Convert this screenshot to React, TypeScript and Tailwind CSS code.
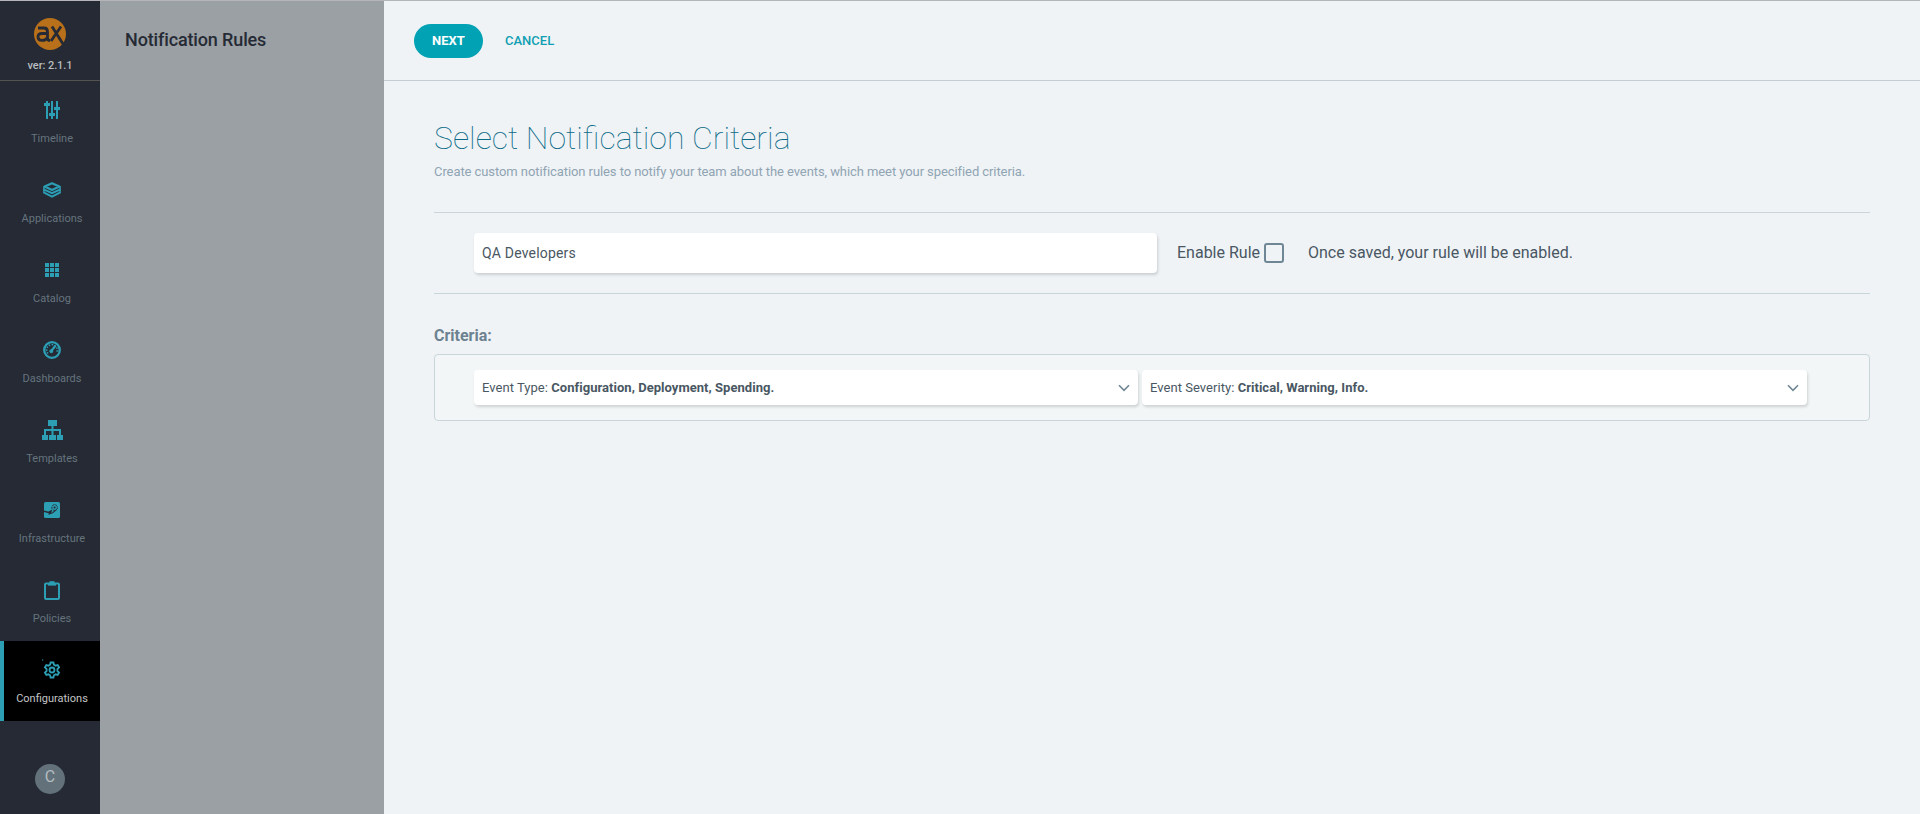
import React from "react";

const TimelineIcon = () => (
  <svg width="16" height="18" viewBox="0 0 16 18" fill="#2c9fb5">
    <path d="M2 0h2v2h2v3H4v13H2V5H0V2h2z" />
    <path d="M7 0h2v12h2v3H9v3H7v-3H5v-3h2z" />
    <path d="M12 0h2v6h2v3h-2v9h-2V9h-2V6h2z" />
  </svg>
);

const LayersIcon = () => (
  <svg width="18" height="16" viewBox="0 0 18 16" fill="none" stroke="#2c9fb5">
    <path d="M9 1.300 16.300 4.600 9 8 1.700 4.600z" strokeWidth="2.200" strokeLinejoin="round" />
    <path d="M.6 7.300 9 11.200l8.400-3.900M.6 10.400 9 14.600l8.400-4.200" strokeWidth="2" />
    <path d="M.9 4v7M17.100 4v7" strokeWidth="1.400" />
  </svg>
);

const GridIcon = () => (
  <svg width="14" height="14" viewBox="0 0 14 14" fill="#2c9fb5">
    <path d="M0 0h4v4H0zM5 0h4v4H5zM10 0h4v4h-4zM0 5h4v4H0zM5 5h4v4H5zM10 5h4v4h-4zM0 10h4v4H0zM5 10h4v4H5zM10 10h4v4h-4z" />
  </svg>
);

const GaugeIcon = () => (
  <svg width="18" height="18" viewBox="0 0 18 18" fill="none" stroke="#2c9fb5">
    <circle cx="9" cy="9" r="7.800" strokeWidth="2.300" />
    <path d="M5 12.500A5.300 5.300 0 1 1 13.300 12" strokeWidth="1.500" strokeDasharray="1.500 1.400" />
    <path d="M8.300 10 12.400 4.800" strokeWidth="2.200" />
    <circle cx="8.300" cy="10.200" r="1.500" fill="#2c9fb5" />
  </svg>
);

const SitemapIcon = () => (
  <svg width="21" height="20" viewBox="0 0 21 20" fill="#2c9fb5">
    <path d="M6 0h9v6H6zM9.500 6h2v9h-2zM2 9h17v2H2zM2 9h2v6H2zM17 9h2v6h-2z" />
    <path d="M0 15h6v5H0zM7 15h7v5H7zM15 15h6v5h-6z" />
  </svg>
);

const InfraIcon = () => (
  <svg width="16" height="16" viewBox="0 0 16 16">
    <rect width="16" height="16" rx="1.500" fill="#2c9fb5" />
    <path d="M0 9.200 4.500 10.500 8 8.500" fill="none" stroke="#252a35" strokeWidth="1.500" />
    <path d="M4.500 12.200 8.500 10.800 12.500 7.500" fill="none" stroke="#252a35" strokeWidth="1.100" />
    <circle cx="6" cy="10.700" r="1.300" fill="#252a35" />
    <circle cx="10.600" cy="5.500" r="2.800" fill="#2c9fb5" stroke="#252a35" strokeDasharray="2.600 .8" />
    <circle cx="10.600" cy="5.500" r="1.100" fill="#252a35" />
  </svg>
);

const ClipboardIcon = () => (
  <svg width="16" height="19" viewBox="0 0 16 19" fill="none" stroke="#2c9fb5" strokeWidth="2">
    <rect x="1" y="2.500" width="14" height="15.500" rx="1" />
    <path d="M4 3.600h8" />
    <path d="M5.500 1.200h5" />
  </svg>
);

const GearIcon = () => (
  <svg width="20" height="20" viewBox="0 0 24 24" fill="none" stroke="#2c9fb5" strokeWidth="2.200" className="overflow-visible">
    <path d="M10.300 3h3.400l.6 2.700 1.900 1.100 2.600-.8 1.700 2.900-2 1.900v2.400l2 1.900-1.700 2.900-2.600-.8-1.900 1.100-.6 2.700h-3.400l-.6-2.700-1.900-1.100-2.600.8-1.700-2.900 2-1.900v-2.400l-2-1.900L5.200 6l2.600.8 1.900-1.100z" />
    <circle cx="12" cy="12" r="3" />
    <path d="M0 .6h1.500v-1.200H0z" fill="#2c9fb5" stroke="none" />
  </svg>
);

const items = [
  { label: "Timeline", icon: <TimelineIcon /> },
  { label: "Applications", icon: <LayersIcon /> },
  { label: "Catalog", icon: <GridIcon /> },
  { label: "Dashboards", icon: <GaugeIcon /> },
  { label: "Templates", icon: <SitemapIcon /> },
  { label: "Infrastructure", icon: <InfraIcon /> },
  { label: "Policies", icon: <ClipboardIcon /> },
  { label: "Configurations", icon: <GearIcon />, active: true },
];

const Chevron = () => (
  <svg width="12" height="8" viewBox="0 0 12 8" fill="none" stroke="#6f8794" strokeWidth="1.600">
    <path d="M1 1.200 6 6.300l5-5.100" />
  </svg>
);

function Select({ label, value, className }: { label: string; value: string; className: string }) {
  return (
    <div className={`flex h-[35px] items-center justify-between rounded bg-white pr-2 pl-2 text-[13px] tracking-[0.04px] text-[#495763] shadow-[1px_2px_3px_rgba(0,0,0,0.15)] ${className}`}>
      <span>
        {label} <b className="font-bold">{value}</b>
      </span>
      <Chevron />
    </div>
  );
}

export default function App() {
  return (
    <div className="flex h-[814px] w-[1920px] overflow-hidden border-t border-[#b4b5b9] bg-[#eff3f6] font-['Roboto',sans-serif]">
      <aside className="flex w-[100px] shrink-0 flex-col bg-[#252a35]">
        <div className="flex h-20 flex-col items-center border-b border-[#55534f] pt-[17px]">
          <svg width="32" height="32" viewBox="0 0 32 32">
            <circle cx="16" cy="16" r="16" fill="#b8701a" />
            <g fill="none" stroke="#252a35" strokeWidth="2.800">
              <path d="M4 10h6q3.500 0 3.500 4v6q0 2.500 2.500 2.500M13.500 15.500H8q-4 0-4 3.400t4 3.500q4.500 0 5.500-3.400" />
              <path d="M18 8.500 29 26M27 8.500 17 23" />
            </g>
          </svg>
          <span className="mt-2 text-[11px] leading-4 font-medium tracking-[-0.08px] text-[#b9bcbe]">ver: 2.1.1</span>
        </div>
        <nav>
          {items.map((it) => (
            <div
              key={it.label}
              className={`flex h-20 flex-col items-center border-l-4 ${
                it.active ? "border-[#2c9fb5] bg-black text-[#c4c5c6]" : "border-transparent text-[#65747d]"
              }`}
            >
              <div className="mt-[17px] flex h-6 items-center">{it.icon}</div>
              <span className="mt-[9px] text-[11px] leading-4">{it.label}</span>
            </div>
          ))}
        </nav>
        <div className="mt-[43px] ml-[35px] flex h-[30px] w-[30px] items-center justify-center rounded-full bg-[#62717a] pb-1 text-base text-[#b4bcc1]">
          C
        </div>
      </aside>
      <section className="w-[284px] shrink-0 bg-[#9ba0a4] pt-[27px] pl-[25px]">
        <h2 className="text-[18px] leading-6 font-medium tracking-[-0.14px] text-[#252a35]">Notification Rules</h2>
      </section>
      <main className="flex-1">
        <header className="flex h-20 items-start border-b border-[#c3cfd5] pt-[23px] pl-[30px] text-[13px] font-medium">
          <button className="h-[34px] w-[69px] rounded-full bg-[#00a2b3] font-bold text-white">NEXT</button>
          <button className="ml-[22px] h-[34px] text-[#0f9fb2]">CANCEL</button>
        </header>
        <div className="pt-[37px] pr-[50px] pl-[50px]">
          <h1 className="text-[32px] leading-10 font-thin text-[#0b6a86]">Select Notification Criteria</h1>
          <p className="mt-1 text-[13px] leading-5 tracking-[-0.08px] text-[#90a4b3]">
            Create custom notification rules to notify your team about the events, which meet your specified criteria.
          </p>
          <div className="mt-[30px] flex h-[82px] items-center border-y border-[#c8d6dc] pl-10 text-[#495763]">
            <div className="flex h-10 w-[683px] items-center rounded bg-white pl-2 text-sm tracking-[0.18px] shadow-[1px_2px_3px_rgba(0,0,0,0.15)]">
              QA Developers
            </div>
            <div className="ml-5 flex w-[87px] text-base">Enable Rule</div>
            <span className="h-5 w-5 rounded-[3px] border-2 border-[#6f8794]" />
            <span className="ml-6 text-base">Once saved, your rule will be enabled.</span>
          </div>
          <h3 className="mt-[30px] text-base leading-6 font-bold text-[#6d8290]">Criteria:</h3>
          <div className="mt-[6px] flex h-[67px] items-center gap-1 rounded border border-[#c8d6dc] bg-[#f2f6f7] pl-[39px]">
            <Select label="Event Type:" value="Configuration, Deployment, Spending." className="w-[664px]" />
            <Select label="Event Severity:" value="Critical, Warning, Info." className="w-[665px]" />
          </div>
        </div>
      </main>
    </div>
  );
}
